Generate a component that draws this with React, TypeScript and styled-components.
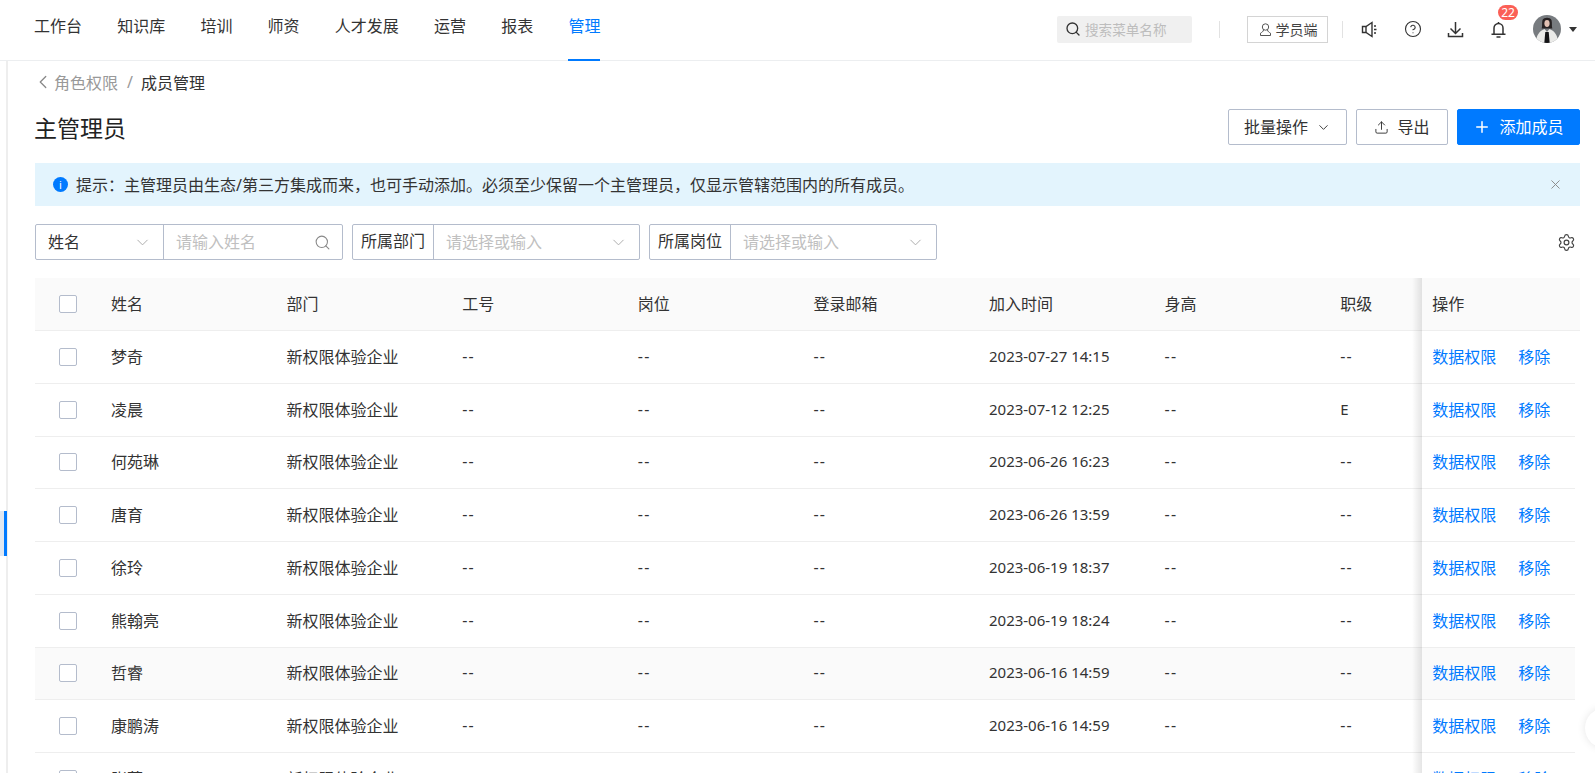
import React from 'react'
import styled, { createGlobalStyle } from 'styled-components'
import { ChevronDown, ChevronLeft, CircleHelp, Plus, Search, Settings, Upload, X } from 'lucide-react'

const GlobalStyle = createGlobalStyle`
  html, body {
    margin: 0;
    height: 100%;
    overflow: hidden;
    background: #fff;
  }
  body {
    font-family: "Noto Sans", "Noto Sans CJK SC", sans-serif;
    font-size: 16px;
    color: #333;
  }
  * { box-sizing: border-box; }
`

const navItems = ['工作台', '知识库', '培训', '师资', '人才发展', '运营', '报表', '管理']

const members = [
  { name: '梦奇', time: '2023-07-27 14:15', level: '--' },
  { name: '凌晨', time: '2023-07-12 12:25', level: 'E' },
  { name: '何苑琳', time: '2023-06-26 16:23', level: '--' },
  { name: '唐育', time: '2023-06-26 13:59', level: '--' },
  { name: '徐玲', time: '2023-06-19 18:37', level: '--' },
  { name: '熊翰亮', time: '2023-06-19 18:24', level: '--' },
  { name: '哲睿', time: '2023-06-16 14:59', level: '--', hover: true },
  { name: '康鹏涛', time: '2023-06-16 14:59', level: '--' },
  { name: '张蕾', time: '2023-06-16 14:59', level: '--' },
]

const SpeakerIcon = () => (
  <svg width="19" height="19" viewBox="0 0 19 19" fill="none" stroke="#333" strokeWidth="1.4">
    <path d="M1.5 6.5h3.5l6-4v14l-6-4H1.5z" />
    <path d="M5 6.5v6M13 6h2M13 9.5h2.5M13 13h2" />
  </svg>
)

const DownloadIcon = () => (
  <svg width="19" height="19" viewBox="0 0 19 19" fill="none" stroke="#333" strokeWidth="1.5">
    <path d="M9.5 2v11M4.5 8.5l5 5 5-5" />
    <path d="M2.5 13v3.5h14V13" />
  </svg>
)

const BellIcon = () => (
  <svg width="19" height="19" viewBox="0 0 19 19" fill="none" stroke="#333" strokeWidth="1.5">
    <path d="M5 14V8a4.5 4.5 0 0 1 9 0v6" />
    <path d="M2.5 14.2h14M7.5 17h4M9.5 2v1.5" />
  </svg>
)

const UserIcon = () => (
  <svg width="15" height="15" viewBox="0 0 15 15" fill="none" stroke="#555" strokeWidth="1">
    <circle cx="7.5" cy="5" r="3.2" />
    <path d="M5.5 8C5.5 9.5 3.5 10.5 2.5 11.2V13.5h10v-2.3C11.5 10.500 9.500 9.500 9.500 8" />
  </svg>
)

const Avatar = () => (
  <svg width="28" height="28" viewBox="0 0 28 28">
    <defs>
      <clipPath id="avatar-clip"><circle cx="14" cy="14" r="14" /></clipPath>
    </defs>
    <g clipPath="url(#avatar-clip)">
      <rect width="28" height="28" fill="#777b7f" />
      <path d="M9.5 5c1.5-3 7.500-3 9 0 .8 3 0 6 .8 8.500h-10.600c.8-2.500 0-5.500.8-8.500z" fill="#262122" />
      <ellipse cx="14" cy="8.500" rx="2.600" ry="3.400" fill="#e2c0b2" />
      <path d="M3 28c0-7 3-12 8.500-14l2.500 3 2.500-3c5.500 2 8.500 7 8.500 14z" fill="#ebebe9" />
      <path d="M12.300 17h3.400l1 11h-5.400z" fill="#141416" />
    </g>
  </svg>
)

export default function App() {
  return (
    <Page>
      <GlobalStyle />
      <Header>
        <Nav>
          {navItems.map((item) => (
            <NavItem key={item} $active={item === '管理'}>{item}</NavItem>
          ))}
        </Nav>
        <Tools>
          <MenuSearch>
            <Search size={16} color="#333" strokeWidth={2} />
            <span>搜索菜单名称</span>
          </MenuSearch>
          <ToolDivider $left={27} $right={27} />
          <StudentButton><UserIcon />学员端</StudentButton>
          <ToolDivider $left={14} $right={7} />
          <IconSlot $width={41}><SpeakerIcon /></IconSlot>
          <IconSlot><CircleHelp size={18} color="#333" strokeWidth={1.5} /></IconSlot>
          <IconSlot><DownloadIcon /></IconSlot>
          <IconSlot>
            <BellIcon />
            <Badge>22</Badge>
          </IconSlot>
          <AvatarWrap><Avatar /><Caret /></AvatarWrap>
        </Tools>
      </Header>
      <Body>
        <Rail><RailMarker /></Rail>
        <Main>
          <Breadcrumb>
            <ChevronLeft size={22} color="#888" strokeWidth={1.4} />
            <CrumbLink>角色权限</CrumbLink>
            <CrumbSep>/</CrumbSep>
            <CrumbCurrent>成员管理</CrumbCurrent>
          </Breadcrumb>
          <TitleRow>
            <Title>主管理员</Title>
            <Actions>
              <Button $width={119}><ButtonLabel>批量操作</ButtonLabel><ChevronDown size={15} strokeWidth={1.5} /></Button>
              <Button $width={92}><Upload size={15} strokeWidth={1.5} /><ButtonLabel>导出</ButtonLabel></Button>
              <Button $width={123} $primary><Plus size={18} strokeWidth={2} /><ButtonLabel>添加成员</ButtonLabel></Button>
            </Actions>
          </TitleRow>
          <Notice>
            <InfoDot>i</InfoDot>
            <NoticeText>提示：主管理员由生态/第三方集成而来，也可手动添加。必须至少保留一个主管理员，仅显示管辖范围内的所有成员。</NoticeText>
            <X size={15} color="#888" strokeWidth={1.5} />
          </Notice>
          <Filters>
            <FilterGroup $width={308}>
              <FieldLabel $width={128}><FieldText>姓名</FieldText><ChevronDown size={19} color="#aaa" strokeWidth={1.2} /></FieldLabel>
              <FieldInput><FieldText>请输入姓名</FieldText><Search size={17} color="#888" strokeWidth={1.5} /></FieldInput>
            </FilterGroup>
            <FilterGroup $width={288}>
              <FieldTag>所属部门</FieldTag>
              <FieldInput><FieldText>请选择或输入</FieldText><ChevronDown size={19} color="#aaa" strokeWidth={1.2} /></FieldInput>
            </FilterGroup>
            <FilterGroup $width={288}>
              <FieldTag>所属岗位</FieldTag>
              <FieldInput><FieldText>请选择或输入</FieldText><ChevronDown size={19} color="#aaa" strokeWidth={1.2} /></FieldInput>
            </FilterGroup>
            <GearSlot><Settings size={19} color="#444" strokeWidth={1.5} /></GearSlot>
          </Filters>
          <Table>
            <HeadRow>
              <CheckCell><CheckBox /></CheckCell>
              <Cell>姓名</Cell>
              <Cell>部门</Cell>
              <Cell>工号</Cell>
              <Cell>岗位</Cell>
              <Cell>登录邮箱</Cell>
              <Cell>加入时间</Cell>
              <Cell>身高</Cell>
              <Cell>职级</Cell>
              <FixedCell $head>操作</FixedCell>
            </HeadRow>
            {members.map((m) => (
              <Row key={m.name} $hover={m.hover}>
                <CheckCell><CheckBox /></CheckCell>
                <Cell>{m.name}</Cell>
                <Cell>新权限体验企业</Cell>
                <Cell><Dash>--</Dash></Cell>
                <Cell><Dash>--</Dash></Cell>
                <Cell><Dash>--</Dash></Cell>
                <TimeCell>{m.time}</TimeCell>
                <Cell><Dash>--</Dash></Cell>
                <Cell>{m.level === '--' ? <Dash>--</Dash> : <Level>{m.level}</Level>}</Cell>
                <FixedCell $hover={m.hover}>
                  <LinkText>数据权限</LinkText>
                  <LinkText>移除</LinkText>
                </FixedCell>
              </Row>
            ))}
          </Table>
        </Main>
      </Body>
      <FloatBall />
    </Page>
  )
}

const Page = styled.div`
  width: 1595px;
  height: 773px;
  overflow: hidden;
  position: relative;
`

const Header = styled.header`
  height: 61px;
  display: flex;
  justify-content: space-between;
  border-bottom: 1px solid #eceef0;
  padding: 0 18px 0 34px;
`

const Nav = styled.nav`
  display: flex;
  gap: 35.2px;
`

const NavItem = styled.div<{ $active?: boolean }>`
  height: 61px;
  line-height: 53px;
  font-size: 16px;
  color: ${(p) => (p.$active ? '#007aff' : '#333')};
  border-bottom: 2px solid ${(p) => (p.$active ? '#007aff' : 'transparent')};
`

const Tools = styled.div`
  display: flex;
  align-items: center;
  height: 58px;
`

const MenuSearch = styled.div`
  width: 135px;
  height: 27px;
  background: #f0f0f0;
  border-radius: 2px;
  display: flex;
  align-items: center;
  gap: 4px;
  padding-left: 8px;
  font-size: 13.6px;
  color: #bdbdbd;
`

const ToolDivider = styled.div<{ $left: number; $right: number }>`
  width: 1px;
  height: 17px;
  background: #e2e2e2;
  margin: 0 ${(p) => p.$right}px 0 ${(p) => p.$left}px;
`

const StudentButton = styled.div`
  width: 81px;
  height: 27px;
  border: 1px solid #d4d4d4;
  display: flex;
  align-items: center;
  justify-content: center;
  gap: 3px;
  font-size: 14px;
  color: #444;
`

const IconSlot = styled.div<{ $width?: number }>`
  position: relative;
  width: ${(p) => p.$width ?? 43}px;
  display: flex;
  justify-content: center;
`

const Badge = styled.span`
  position: absolute;
  top: -15px;
  left: 21px;
  width: 20px;
  height: 15px;
  border-radius: 8px;
  background: #fb5f56;
  color: #fff;
  font-size: 12px;
  line-height: 15px;
  text-align: center;
`

const AvatarWrap = styled.div`
  display: flex;
  align-items: center;
  gap: 8px;
  margin-left: 13px;
`

const Caret = styled.span`
  width: 0;
  height: 0;
  border: 4px solid transparent;
  border-top: 5px solid #333;
  border-bottom: 0;
`

const Body = styled.div`
  display: flex;
`

const Rail = styled.div`
  width: 8px;
  height: 712px;
  border-right: 2px solid #eeeeee;
  position: relative;
  flex: none;
`

const RailMarker = styled.div`
  position: absolute;
  top: 450px;
  left: 0;
  width: 7px;
  height: 45px;
  background: #e1e8f1;
  border-right: 3px solid #007aff;
`

const Main = styled.main`
  flex: 1;
  padding: 0 15px 0 27px;
`

const Breadcrumb = styled.div`
  height: 45px;
  display: flex;
  align-items: center;
  font-size: 16px;
  padding-bottom: 3px;
  margin-left: -3px;
`

const CrumbLink = styled.span`
  color: #999;
`

const CrumbSep = styled.span`
  color: #999;
  margin: 0 9px;
`

const CrumbCurrent = styled.span`
  color: #333;
  margin-left: -1px;
`

const TitleRow = styled.div`
  height: 36px;
  margin-top: 3px;
  display: flex;
  justify-content: space-between;
  align-items: center;
`

const Title = styled.h1`
  margin: 0 0 0 -1px;
  font-size: 23px;
  font-weight: 400;
  color: #222;
`

const Actions = styled.div`
  display: flex;
  gap: 9px;
`

const Button = styled.button<{ $width: number; $primary?: boolean }>`
  width: ${(p) => p.$width}px;
  height: 36px;
  padding: 0;
  display: flex;
  align-items: center;
  justify-content: center;
  gap: 8px;
  font: inherit;
  border-radius: 2px;
  border: 1px solid ${(p) => (p.$primary ? '#007aff' : '#b4bccc')};
  background: ${(p) => (p.$primary ? '#007aff' : '#fff')};
  color: ${(p) => (p.$primary ? '#fff' : '#333')};
`

const ButtonLabel = styled.span`
  padding-bottom: 2px;
`

const Notice = styled.div`
  height: 43px;
  margin-top: 18px;
  background: #e3f4fd;
  display: flex;
  align-items: center;
  padding: 0 17px 0 18px;
  gap: 8px;
`

const InfoDot = styled.span`
  width: 15px;
  height: 15px;
  border-radius: 50%;
  background: #007aff;
  color: #fff;
  font-size: 11px;
  line-height: 15px;
  text-align: center;
  flex: none;
`

const NoticeText = styled.span`
  flex: 1;
  padding-bottom: 2px;
`

const Filters = styled.div`
  height: 36px;
  margin-top: 18px;
  display: flex;
  gap: 9px;
  align-items: center;
`

const FilterGroup = styled.div<{ $width: number }>`
  width: ${(p) => p.$width}px;
  height: 36px;
  display: flex;
  border: 1px solid #b4bccc;
  border-radius: 2px;
`

const FieldLabel = styled.div<{ $width: number }>`
  width: ${(p) => p.$width}px;
  flex: none;
  display: flex;
  align-items: center;
  justify-content: space-between;
  padding: 0 11px 0 12px;
  border-right: 1px solid #b4bccc;
`

const FieldTag = styled.div`
  flex: none;
  width: 81px;
  line-height: 32px;
  text-align: center;
  border-right: 1px solid #b4bccc;
`

const FieldInput = styled.div`
  flex: 1;
  display: flex;
  align-items: center;
  justify-content: space-between;
  padding: 0 11px 0 12px;
  color: #c0c0c0;
`

const FieldText = styled.span`
  padding-bottom: 2px;
`

const GearSlot = styled.div`
  margin-left: auto;
  margin-right: 4px;
  display: flex;
`

const Table = styled.div`
  margin-top: 18px;
  width: 1540px;
`

const columns = '66px repeat(7, 175.6px) 92px 153px'

const HeadRow = styled.div`
  display: grid;
  grid-template-columns: ${columns};
  height: 53px;
  width: 1545px;
  padding-right: 5px;
  background: #fafafa;
  border-bottom: 1px solid #eee;
  align-items: center;
`

const Row = styled.div<{ $hover?: boolean }>`
  display: grid;
  grid-template-columns: ${columns};
  height: 52.75px;
  background: ${(p) => (p.$hover ? '#fafafa' : '#fff')};
  border-bottom: 1px solid #eee;
  align-items: center;
`

const CheckCell = styled.div`
  padding-left: 24px;
  display: flex;
`

const CheckBox = styled.span`
  width: 18px;
  height: 18px;
  border: 1px solid #b4bccc;
  border-radius: 2px;
  background: #fff;
`

const Cell = styled.div`
  padding: 0 0 2px 10px;
  white-space: nowrap;
`

const TimeCell = styled(Cell)`
  font-size: 15px;
`

const Dash = styled.span`
  letter-spacing: 1.2px;
`

const Level = styled.span`
  font-size: 15px;
`

const FixedCell = styled.div<{ $head?: boolean; $hover?: boolean }>`
  position: relative;
  height: 100%;
  display: flex;
  align-items: center;
  gap: 22px;
  padding: 0 0 2px 10px;
  background: ${(p) => (p.$head || p.$hover ? '#fafafa' : '#fff')};

  &::before {
    content: '';
    position: absolute;
    top: 0;
    bottom: -1px;
    left: -10px;
    width: 10px;
    background: linear-gradient(to left, rgba(0, 0, 0, 0.1), rgba(0, 0, 0, 0));
  }
`

const LinkText = styled.span`
  color: #007aff;
`

const FloatBall = styled.div`
  position: absolute;
  left: 1585px;
  top: 708px;
  width: 40px;
  height: 40px;
  border-radius: 50%;
  background: #fff;
  box-shadow: 0 0 8px rgba(0, 0, 0, 0.1);
`
